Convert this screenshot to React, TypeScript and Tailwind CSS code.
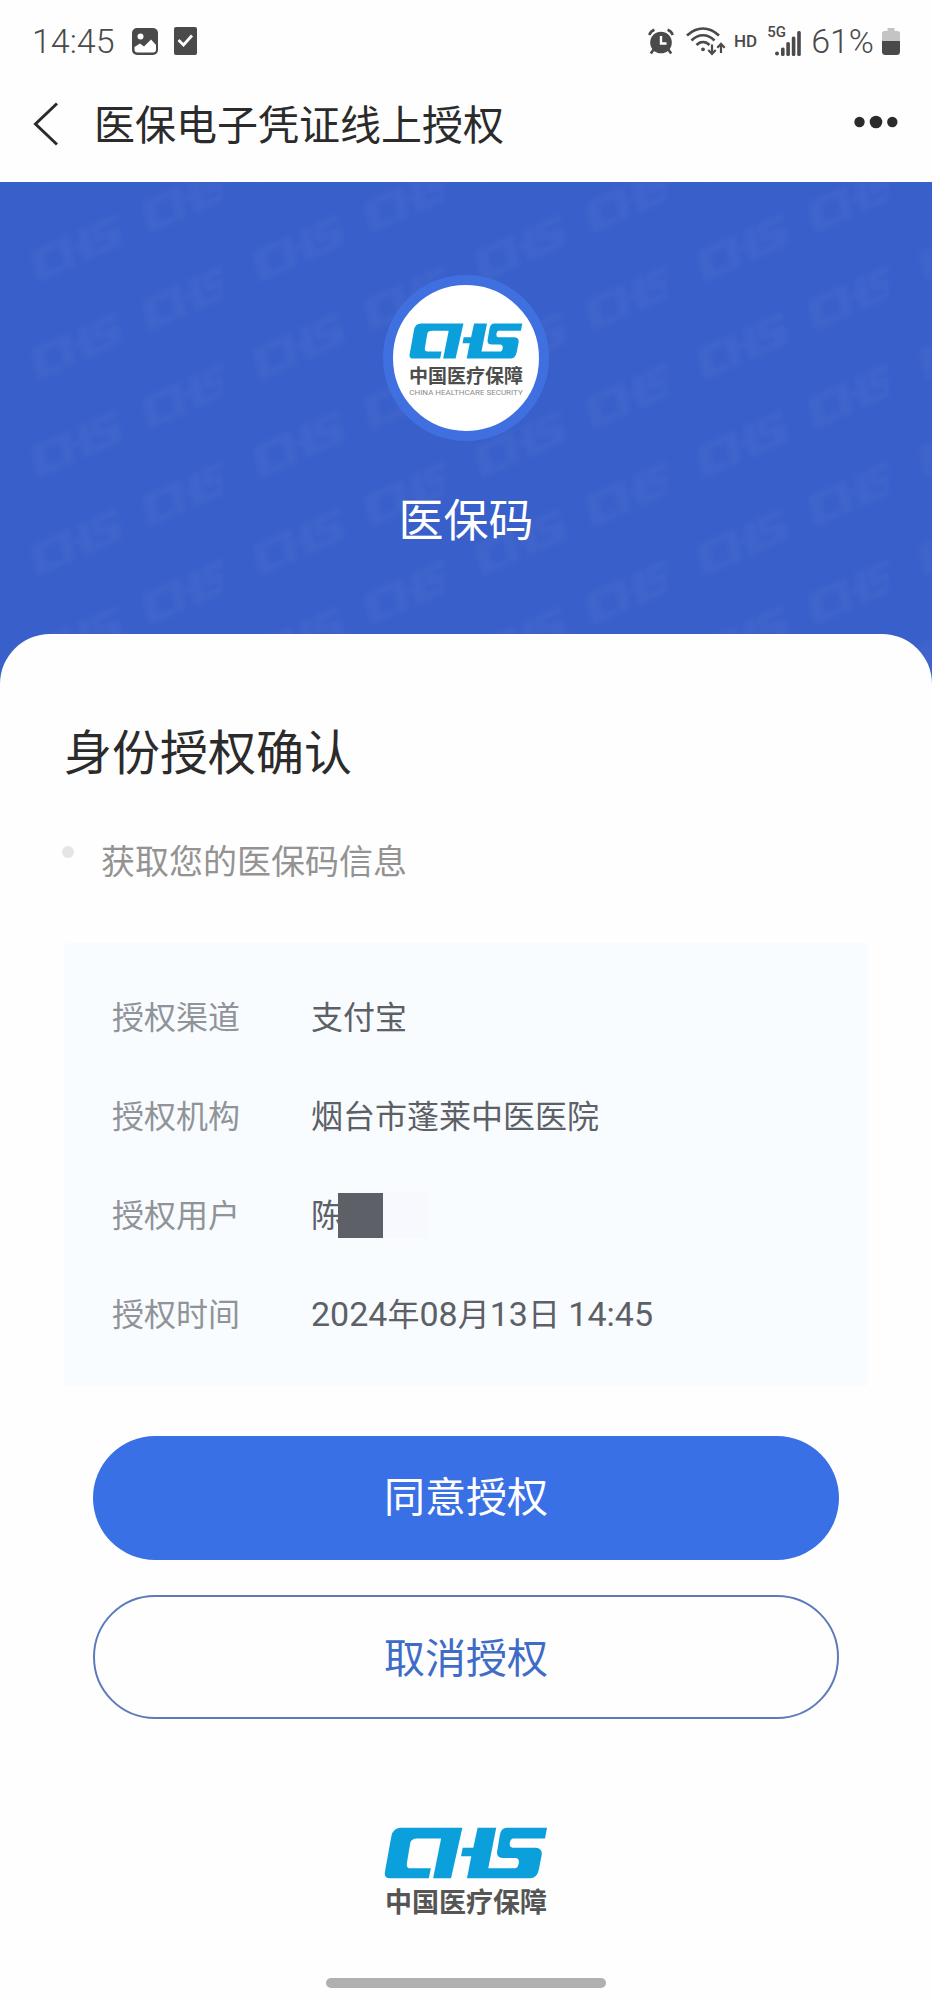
import React from "react";

const SANS = "font-[Roboto,'Noto_Sans_CJK_SC',sans-serif]";

const LEFT_MARK =
  "M64 22H248L214 174H160L184 54H112Q94 54 91 68L81 128Q78 144 92 144H153L147 174H30Q11 174 15 154L34 48Q39 22 64 22Z";
const RIGHT_MARK =
  "M294 22H350L326 144H406Q416 144 418 128Q420 113 408 113H372Q349 113 353 92L361 44Q365 22 382 22H503L497 54H402Q393 54 391 68Q389 82 400 82H466Q490 82 487 104L478 150Q472 174 452 174H262L275 108H244L249 82H281Z";

function ChsMark({ className }: { className: string }) {
  return (
    <svg viewBox="12 20 494 156" className={className} fill="currentColor" aria-hidden="true">
      <path d={LEFT_MARK} />
      <path d={RIGHT_MARK} />
    </svg>
  );
}

function Watermark() {
  return (
    <svg className="absolute inset-0 h-full w-full" aria-hidden="true">
      <defs>
        <g id="wm">
          <g transform="rotate(-24) scale(0.2) translate(-258 -98)">
            <path d={LEFT_MARK} />
            <path d={RIGHT_MARK} />
          </g>
        </g>
        <pattern id="wm-tile" width="222" height="98" patternUnits="userSpaceOnUse">
          <g fill="#ffffff" fillOpacity="0.03">
            <use href="#wm" x="77" y="66" />
            <use href="#wm" x="77" y="-32" />
            <use href="#wm" x="188" y="17" />
            <use href="#wm" x="188" y="115" />
          </g>
        </pattern>
        <filter id="wm-soft">
          <feGaussianBlur stdDeviation="2.2" />
        </filter>
      </defs>
      <rect width="100%" height="100%" fill="url(#wm-tile)" filter="url(#wm-soft)" />
    </svg>
  );
}

function GalleryIcon() {
  return (
    <svg viewBox="0 0 26 27" className="h-[27px] w-[26px]" aria-hidden="true">
      <rect width="26" height="27" rx="5" fill="#4a4a4a" />
      <circle cx="8.5" cy="8.5" r="3" fill="#fff" />
      <path d="M2.5 19L8 15.5L12 18.5L19 11.5L24 17V21.5Q24 24.5 21 24.5H5.5Q2.5 24.5 2.5 21.5Z" fill="#fff" />
    </svg>
  );
}

function TaskIcon() {
  return (
    <svg viewBox="0 0 23 28" className="h-7 w-[23px]" aria-hidden="true">
      <rect width="23" height="28" rx="2" fill="#4a4a4a" />
      <path d="M4.5 13L9.5 18L18 8.5" fill="none" stroke="#fff" strokeWidth="2.8" />
    </svg>
  );
}

function AlarmIcon() {
  return (
    <svg viewBox="0 0 26 27" className="h-[27px] w-[26px]" aria-hidden="true">
      <circle cx="13" cy="14.5" r="10.8" fill="#4a4a4a" />
      <g stroke="#4a4a4a" strokeWidth="2.6" fill="none">
        <path d="M1.2 7Q2.6 3.2 6.4 1.8" />
        <path d="M24.8 7Q23.4 3.2 19.6 1.8" />
        <path d="M6 21L2.8 25.6" />
        <path d="M20 21L23.2 25.6" />
      </g>
      <path d="M13 8V15.5H18.5" fill="none" stroke="#fff" strokeWidth="2.4" />
    </svg>
  );
}

function WifiIcon() {
  return (
    <svg viewBox="0 0 40 29" className="h-[29px] w-10" fill="none" stroke="#4a4a4a" strokeWidth="2.6" aria-hidden="true">
      <path d="M1 8.5Q8.5 1.5 17 1.5T33 8.5" />
      <path d="M5.5 13.5Q10.5 8.3 17 8.3T28.5 13.5" />
      <path d="M10.5 18Q13.3 15 17 15T23.5 18" />
      <circle cx="17" cy="22.3" r="1.9" fill="#4a4a4a" stroke="none" />
      <path d="M26 17.5V26.5M22.3 23L26 27L29.7 23" strokeWidth="2.2" />
      <path d="M35 26V17M31.3 20.8L35 16.8L38.7 20.8" strokeWidth="2.2" />
    </svg>
  );
}

function SignalIcon() {
  return (
    <svg viewBox="0 0 26 25" className="h-[25px] w-[26px]" fill="#4a4a4a" aria-hidden="true">
      <circle cx="2" cy="22.5" r="2" />
      <rect x="6" y="16.5" width="3.6" height="8.5" rx="1.5" />
      <rect x="11.3" y="11" width="3.6" height="14" rx="1.5" />
      <rect x="16.8" y="5.5" width="3.6" height="19.5" rx="1.5" />
      <rect x="22.2" y="0" width="3.6" height="25" rx="1.5" />
    </svg>
  );
}

function BatteryIcon() {
  return (
    <svg viewBox="0 0 18 27" className="h-[27px] w-[18px]" aria-hidden="true">
      <path d="M5.5 0H12.5V3H15.5Q18 3 18 5.5V13H0V5.5Q0 3 2.5 3H5.5Z" fill="#c4c4c4" />
      <path d="M0 13H18V23.5Q18 27 14.5 27H3.5Q0 27 0 23.5Z" fill="#4a4a4a" />
    </svg>
  );
}

function StatusBar() {
  return (
    <div className="flex h-[82px] items-center justify-between px-8 text-[#4a4a4a]">
      <div className="flex items-center">
        <span className="w-[84px] text-[34px] leading-10 font-light">14:45</span>
        <span className="ml-4"><GalleryIcon /></span>
        <span className="ml-4"><TaskIcon /></span>
      </div>
      <div className="flex items-center">
        <AlarmIcon />
        <span className="ml-3"><WifiIcon /></span>
        <span className="ml-2 text-[17px] leading-5 font-medium">HD</span>
        <span className="ml-2.5 grid h-[30px] w-[34px]">
          <span className="col-start-1 row-start-1 text-[15px] leading-3 font-medium">5G</span>
          <span className="col-start-1 row-start-1 self-end justify-self-end"><SignalIcon /></span>
        </span>
        <span className="ml-2.5 text-[34px] leading-10 font-light">61%</span>
        <span className="ml-2"><BatteryIcon /></span>
      </div>
    </div>
  );
}

function TitleBar() {
  return (
    <header className="flex h-[100px] items-center px-8 pb-4 text-[#2b2b2b]">
      <button type="button" aria-label="返回" className="flex w-[62px] items-center">
        <svg viewBox="0 0 26 44" className="h-11 w-[26px]" fill="none" stroke="currentColor" strokeWidth="3">
          <path d="M25 1.5L3.5 22L25 42.5" />
        </svg>
      </button>
      <h1 className="pt-1 text-[41px] leading-[50px]">医保电子凭证线上授权</h1>
      <button type="button" aria-label="更多" className="ml-auto pb-1">
        <svg viewBox="0 0 46 14" className="h-3.5 w-[46px]" fill="currentColor">
          <circle cx="5.5" cy="7" r="5.2" />
          <circle cx="22" cy="7" r="6.3" />
          <circle cx="38.3" cy="7" r="5.2" />
        </svg>
      </button>
    </header>
  );
}

function Row({ label, children }: { label: string; children: React.ReactNode }) {
  return (
    <div className="flex h-[99px] items-center">
      <dt className="w-[199px] text-[#909499]">{label}</dt>
      <dd className="flex items-center text-[#5d6066]">{children}</dd>
    </div>
  );
}

function Num({ children }: { children: React.ReactNode }) {
  return <span className="text-[34px]">{children}</span>;
}

export default function App() {
  return (
    <div className={`flex min-h-screen flex-col bg-[#fefefe] ${SANS}`}>
      <StatusBar />
      <TitleBar />
      <div className="relative flex grow flex-col bg-[#395fca]">
        <Watermark />
        <section className="relative flex flex-col items-center pt-[93px] pb-[82px]">
          <div className="flex size-[166px] flex-col items-center rounded-full border-[10px] border-[#4070e0] bg-white pt-[38px]">
            <ChsMark className="h-9 w-[114px] text-[#0b9fdc]" />
            <span className="mt-1.5 text-[19px] leading-6 font-bold whitespace-nowrap text-[#4d4d4d]">中国医疗保障</span>
            <span className="text-[8px] leading-2 whitespace-nowrap text-[#8a8a8a]">CHINA HEALTHCARE SECURITY</span>
          </div>
          <h2 className="mt-[50px] text-[45px] leading-[61px] text-white">医保码</h2>
        </section>
        <main className="relative grow rounded-t-[50px] bg-[#fefefe] px-16 pt-[89px]">
          <h2 className="text-[48px] leading-[62px] text-[#2b2b2b]">身份授权确认</h2>
          <ul className="-ml-0.5 mt-[52px]">
            <li className="flex text-[34px] leading-[50px] text-[#939393]">
              <span className="mt-[9px] mr-[27px] size-3 rounded-full bg-[#e5e5e5]" />
              获取您的医保码信息
            </li>
          </ul>
          <dl className="mt-14 rounded bg-[#f8fcff] px-12 pt-[25px] pb-[22px] text-[32px] leading-10">
            <Row label="授权渠道">支付宝</Row>
            <Row label="授权机构">烟台市蓬莱中医医院</Row>
            <Row label="授权用户">
              陈
              <span className="-ml-[5px] size-[45px] bg-[#5d6066]" />
              <span className="size-[45px] bg-[#f7f9ff]" />
            </Row>
            <Row label="授权时间">
              <span>
                <Num>2024</Num>年<Num>08</Num>月<Num>13</Num>日<Num> 14:45</Num>
              </span>
            </Row>
          </dl>
          <div className="mt-[50px] flex flex-col gap-[35px] px-[29px] text-[41px] leading-[50px]">
            <button type="button" className="h-[124px] rounded-full bg-[#3970e5] text-white">同意授权</button>
            <button type="button" className="h-[124px] rounded-full border-2 border-[#5d7bb8] pt-1 text-[#3f6cc6]">取消授权</button>
          </div>
          <footer className="mt-[108px] flex flex-col items-center">
            <ChsMark className="h-[52px] w-[164px] text-[#0b9fdc]" />
            <span className="mt-1.5 text-[27px] leading-9 font-bold text-[#555555]">中国医疗保障</span>
            <span className="mt-[57px] h-2.5 w-[280px] rounded-full bg-[#b0b0b0]" />
          </footer>
        </main>
      </div>
    </div>
  );
}
